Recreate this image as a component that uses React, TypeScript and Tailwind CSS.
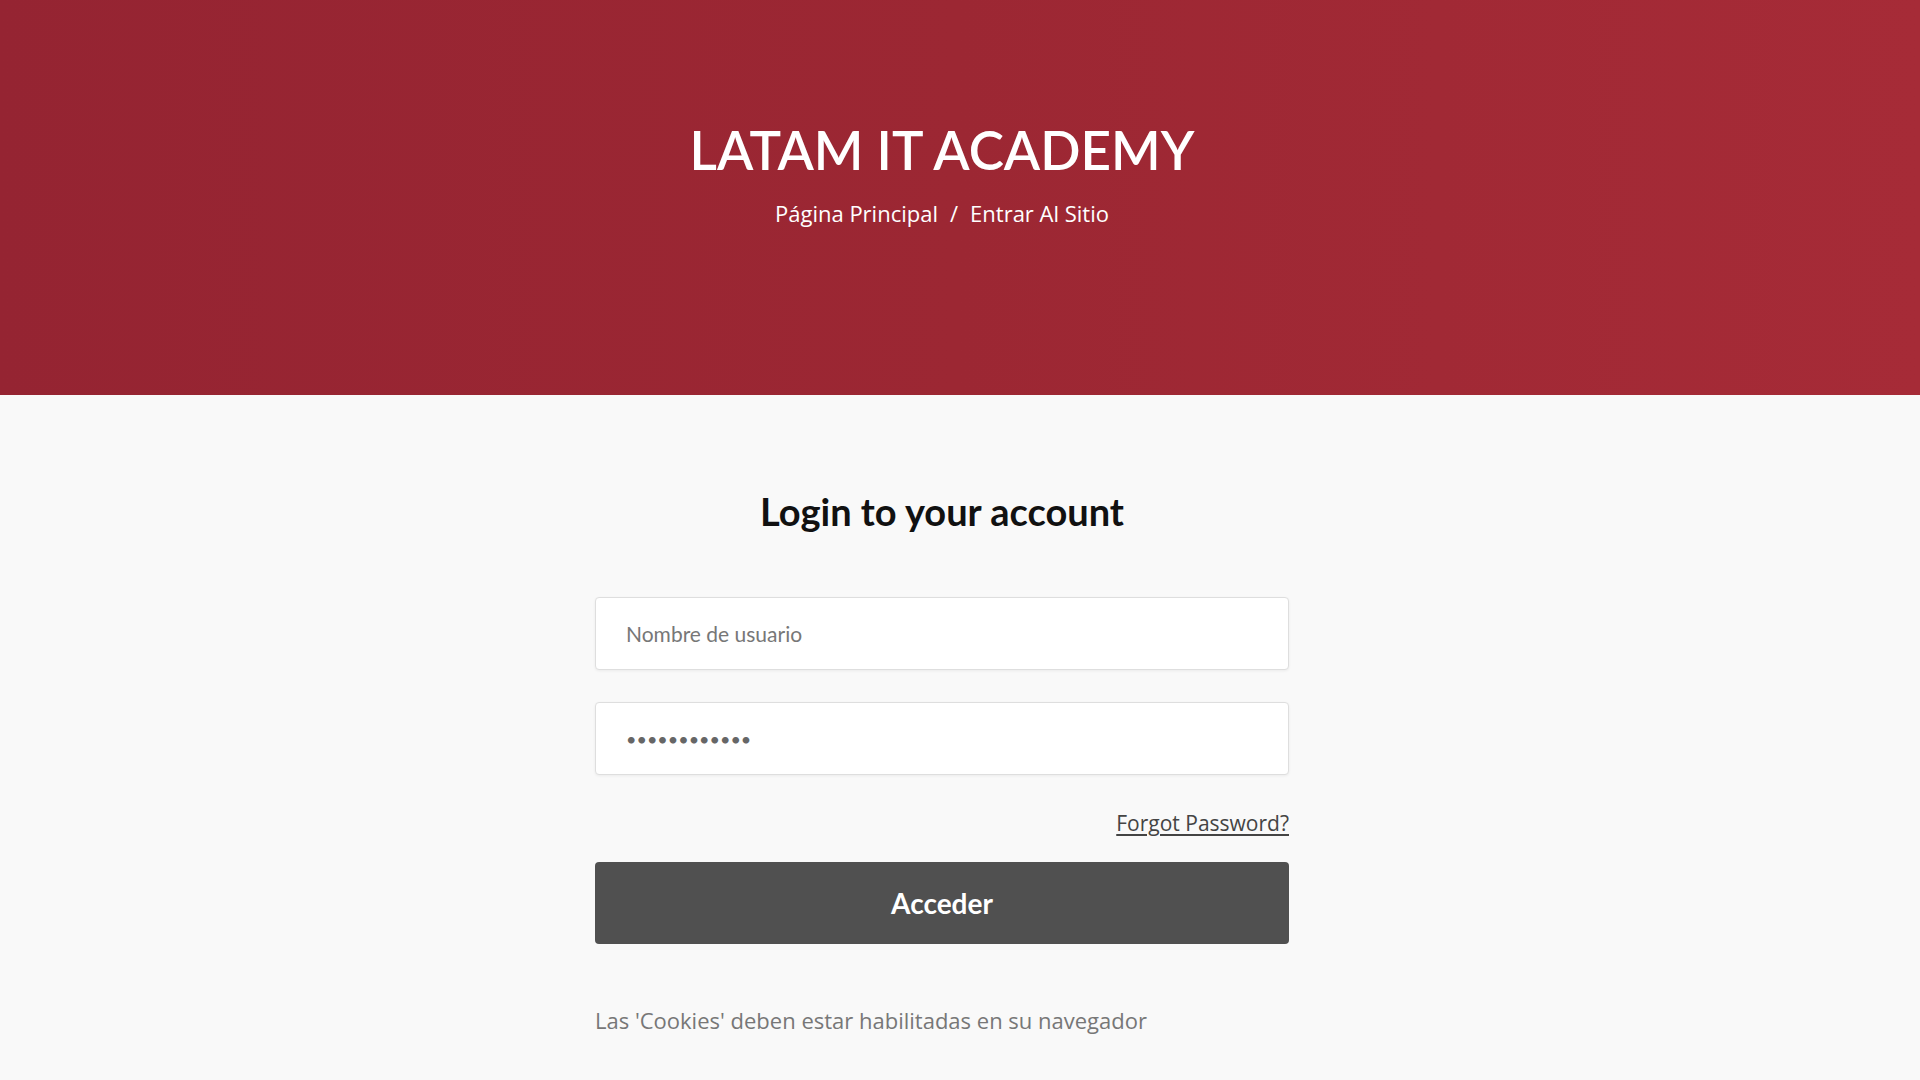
import React from "react";

const App: React.FC = () => {
  return (
    <div className="min-h-screen w-full bg-[#f9f9f9]">
      {/* page header */}
      <div className="h-[395px] w-full bg-gradient-to-r from-[#952432] via-[#9c2733] to-[#a62b37] pr-[36px]">
        <div className="flex flex-col items-center pt-[119px]">
          <h1 className="text-[53px] leading-[62px] font-semibold text-white [font-family:'Lato',sans-serif]">
            LATAM IT ACADEMY
          </h1>
          <div className="mt-[16px] text-[22px] leading-[33px] text-white [font-family:'Open_Sans',sans-serif]">
            <span>Página Principal</span>
            <span className="mx-[12px]">/</span>
            <span>Entrar Al Sitio</span>
          </div>
        </div>
      </div>

      {/* login form */}
      <div className="flex justify-center pr-[36px]">
        <div className="w-[694px] pt-[93px] pb-[40px]">
          <h2 className="text-center text-[38px] leading-[46px] font-bold text-[#111] [font-family:'Lato',sans-serif]">
            Login to your account
          </h2>
          <form className="mt-[63px] flex flex-col" onSubmit={(e) => e.preventDefault()}>
            <input
              type="text"
              placeholder="Nombre de usuario"
              className="h-[73px] w-full rounded-[4px] border border-[#dedede] bg-white px-[30px] text-[21px] text-[#555] shadow-[0_1px_3px_rgba(0,0,0,0.06)] placeholder:text-[#777] focus:outline-none [font-family:'Lato',sans-serif]"
            />
            <input
              type="password"
              defaultValue="abcdefghijkl"
              className="mt-[32px] h-[73px] w-full rounded-[4px] border border-[#dedede] bg-white px-[30px] text-[18px] text-[#666] shadow-[0_1px_3px_rgba(0,0,0,0.06)] focus:outline-none [font-family:'Lato',sans-serif]"
            />
            <div className="mt-[33px] flex justify-end">
              <a
                href="#"
                className="text-[21px] leading-[30px] text-[#444] underline underline-offset-[3px] [font-family:'Open_Sans',sans-serif]"
              >
                Forgot Password?
              </a>
            </div>
            <button
              type="submit"
              className="mt-[24px] h-[82px] w-full rounded-[4px] bg-[#505050] text-[28px] font-bold text-white [font-family:'Lato',sans-serif]"
            >
              Acceder
            </button>
          </form>
          <p className="mt-[60px] text-[22px] leading-[33px] text-[#777] [font-family:'Open_Sans',sans-serif]">
            Las 'Cookies' deben estar habilitadas en su navegador
          </p>
        </div>
      </div>
    </div>
  );
};

export default App;
